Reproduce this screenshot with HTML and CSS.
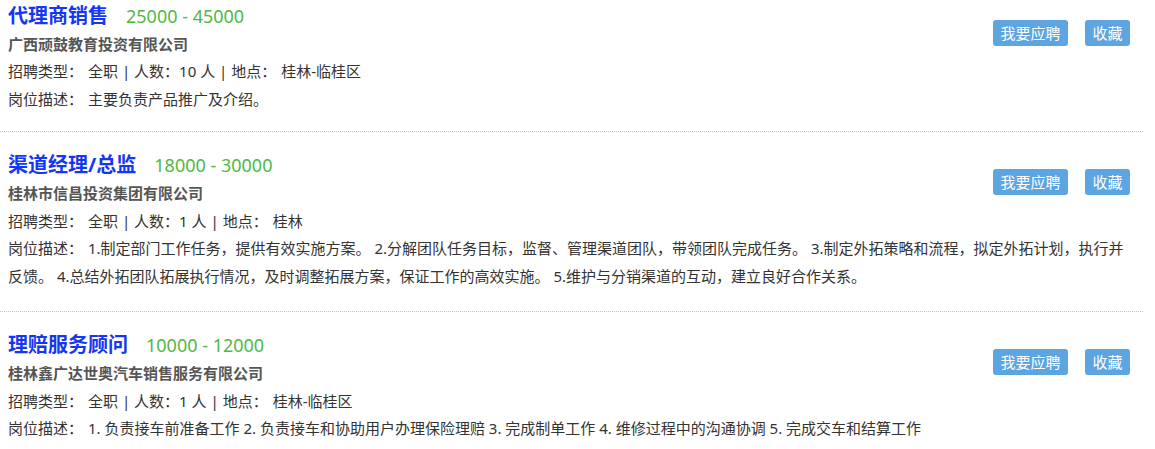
FILE: index.html
```html
<!DOCTYPE html>
<html lang="zh-CN">
<head>
<meta charset="utf-8">
<title>职位列表</title>
<link rel="stylesheet" href="styles.css">
</head>
<body>
<div class="job-list">
  <div class="job">
    <div class="actions">
      <a class="btn">我要应聘</a>
      <a class="btn">收藏</a>
    </div>
    <div class="title-row"><span class="title">代理商销售</span><span class="salary">25000 - 45000</span></div>
    <div class="company">广西顽鼓教育投资有限公司</div>
    <div class="row"><span class="label">招聘类型：</span>全职 | 人数：10 人 | 地点：<span class="loc">桂林-临桂区</span></div>
    <div class="row"><span class="label">岗位描述：</span>主要负责产品推广及介绍。</div>
  </div>
  <div class="job">
    <div class="actions">
      <a class="btn">我要应聘</a>
      <a class="btn">收藏</a>
    </div>
    <div class="title-row"><span class="title">渠道经理/总监</span><span class="salary">18000 - 30000</span></div>
    <div class="company">桂林市信昌投资集团有限公司</div>
    <div class="row"><span class="label">招聘类型：</span>全职 | 人数：1 人 | 地点：<span class="loc">桂林</span></div>
    <div class="row"><span class="label">岗位描述：</span>1.制定部门工作任务，提供有效实施方案。 2.分解团队任务目标，监督、管理渠道团队，带领团队完成任务。 3.制定外拓策略和流程，拟定外拓计划，执行并反馈。 4.总结外拓团队拓展执行情况，及时调整拓展方案，保证工作的高效实施。 5.维护与分销渠道的互动，建立良好合作关系。</div>
  </div>
  <div class="job">
    <div class="actions">
      <a class="btn">我要应聘</a>
      <a class="btn">收藏</a>
    </div>
    <div class="title-row"><span class="title">理赔服务顾问</span><span class="salary">10000 - 12000</span></div>
    <div class="company">桂林鑫广达世奥汽车销售服务有限公司</div>
    <div class="row"><span class="label">招聘类型：</span>全职 | 人数：1 人 | 地点：<span class="loc">桂林-临桂区</span></div>
    <div class="row"><span class="label">岗位描述：</span>1. 负责接车前准备工作 2. 负责接车和协助用户办理保险理赔 3. 完成制单工作 4. 维修过程中的沟通协调 5. 完成交车和结算工作</div>
  </div>
</div>
</body>
</html>
```

FILE: styles.css
```css
html, body {
  margin: 0;
  padding: 0;
  background: #fff;
}
body {
  font-family: "Noto Sans", "Noto Sans CJK SC", sans-serif;
  font-size: 15px;
  color: #333;
}
.job-list {
  width: 1143px;
  margin-top: -17.5px;
}
.job {
  padding: 18px 8px 21px;
  border-bottom: 1px dotted #c4c4c4;
}
.job:first-child {
  padding-bottom: 18px;
}
.actions {
  float: right;
  display: flex;
  gap: 17px;
  margin-top: 19px;
  margin-right: 5px;
}
.btn {
  display: block;
  height: 26px;
  line-height: 26px;
  padding: 0 7.5px;
  background: #5ca5e1;
  color: #fff;
  font-size: 15px;
  border-radius: 3px;
  cursor: pointer;
}
.title-row {
  height: 30px;
  line-height: 30px;
  white-space: nowrap;
}
.title {
  font-size: 20px;
  font-weight: bold;
  color: #1436f5;
}
.salary {
  margin-left: 18px;
  font-size: 18px;
  color: #4fb947;
}
.company {
  line-height: 27.5px;
  font-size: 15px;
  font-weight: bold;
  color: #555;
}
.row {
  line-height: 27.5px;
}
.label {
  margin-right: 5px;
}
.loc {
  margin-left: 5px;
}
```
